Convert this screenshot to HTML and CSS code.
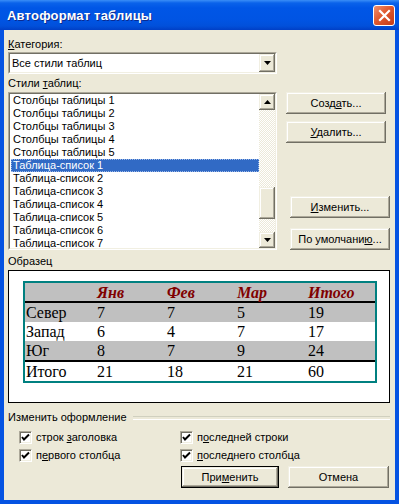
FILE: index.html
```html
<!DOCTYPE html>
<html>
<head>
    <title>Автоформат таблицы</title>
    <link rel="stylesheet" href="styles.css">
</head>
<body>
    <div class="window">
        <div class="titlebar">
            <span class="title">Автоформат таблицы</span>
            <span class="close">
                <svg width="13" height="13" viewBox="0 0 13 13"><path d="M2 2L11 11M11 2L2 11" stroke="#fff" stroke-width="2.2" stroke-linecap="square"/></svg>
            </span>
        </div>

        <div class="dialog">
            <div class="label"><u>К</u>атегория:</div>
            <div class="combo">
                <div class="combo-inner">
                    <span class="combo-text">Все стили таблиц</span>
                    <span class="arrow-btn">
                        <svg width="7" height="4" viewBox="0 0 7 4"><path d="M0 0H7L3.5 4Z" fill="#000"/></svg>
                    </span>
                </div>
            </div>

            <div class="label label-styles">Стили <u>т</u>аблиц:</div>
            <div class="styles-row">
                <div class="list">
                    <div class="list-inner">
                        <div class="items">
                            <div class="item">Столбцы таблицы 1</div>
                            <div class="item">Столбцы таблицы 2</div>
                            <div class="item">Столбцы таблицы 3</div>
                            <div class="item">Столбцы таблицы 4</div>
                            <div class="item">Столбцы таблицы 5</div>
                            <div class="item selected">Таблица-список 1</div>
                            <div class="item">Таблица-список 2</div>
                            <div class="item">Таблица-список 3</div>
                            <div class="item">Таблица-список 4</div>
                            <div class="item">Таблица-список 5</div>
                            <div class="item">Таблица-список 6</div>
                            <div class="item">Таблица-список 7</div>
                        </div>
                        <div class="scrollbar">
                            <span class="arrow-btn scroll-btn">
                                <svg width="7" height="4" viewBox="0 0 7 4"><path d="M0 4H7L3.5 0Z" fill="#000"/></svg>
                            </span>
                            <div class="track">
                                <span class="thumb"></span>
                            </div>
                            <span class="arrow-btn scroll-btn">
                                <svg width="7" height="4" viewBox="0 0 7 4"><path d="M0 0H7L3.5 4Z" fill="#000"/></svg>
                            </span>
                        </div>
                    </div>
                </div>

                <div class="side">
                    <button class="btn">Созд<u>а</u>ть...</button>
                    <button class="btn btn-gap"><u>У</u>далить...</button>
                    <button class="btn btn-shift btn-low"><u>И</u>зменить...</button>
                    <button class="btn btn-shift btn-gap2">По умолчани<u>ю</u>...</button>
                </div>
            </div>

            <div class="label label-sample">Образец</div>
            <div class="sample">
                <table class="sample-table">
                    <tr class="head">
                        <td></td><td>Янв</td><td>Фев</td><td>Мар</td><td>Итого</td>
                    </tr>
                    <tr class="shade">
                        <td>Север</td><td>7</td><td>7</td><td>5</td><td>19</td>
                    </tr>
                    <tr>
                        <td>Запад</td><td>6</td><td>4</td><td>7</td><td>17</td>
                    </tr>
                    <tr class="shade">
                        <td>Юг</td><td>8</td><td>7</td><td>9</td><td>24</td>
                    </tr>
                    <tr class="total">
                        <td>Итого</td><td>21</td><td>18</td><td>21</td><td>60</td>
                    </tr>
                </table>
            </div>

            <div class="group-title">Изменить оформление</div>
            <div class="options">
                <label class="option">
                    <span class="check"><svg width="11" height="11" viewBox="0 0 11 11"><path d="M2 5L4 7.5L9 2.5" stroke="#000" stroke-width="2" fill="none"/></svg></span>
                    <span>строк <u>з</u>аголовка</span>
                </label>
                <label class="option">
                    <span class="check"><svg width="11" height="11" viewBox="0 0 11 11"><path d="M2 5L4 7.5L9 2.5" stroke="#000" stroke-width="2" fill="none"/></svg></span>
                    <span>п<u>о</u>следней строки</span>
                </label>
                <label class="option">
                    <span class="check"><svg width="11" height="11" viewBox="0 0 11 11"><path d="M2 5L4 7.5L9 2.5" stroke="#000" stroke-width="2" fill="none"/></svg></span>
                    <span>п<u>е</u>рвого столбца</span>
                </label>
                <label class="option">
                    <span class="check"><svg width="11" height="11" viewBox="0 0 11 11"><path d="M2 5L4 7.5L9 2.5" stroke="#000" stroke-width="2" fill="none"/></svg></span>
                    <span><u>п</u>оследнего столбца</span>
                </label>
            </div>

            <div class="actions">
                <button class="btn btn-default">При<u>м</u>енить</button>
                <button class="btn btn-cancel">Отмена</button>
            </div>
        </div>
    </div>
</body>
</html>
```

FILE: styles.css
```css
:root {
    --face: #ece9d8;
    --light: #f1efe2;
    --shadow: #aca899;
    --dark: #716f64;
    --frame: #0553e2;
    --select: #316ac5;
}

* {
    box-sizing: border-box;
}

html, body {
    margin: 0;
    padding: 0;
}

body {
    width: 399px;
    height: 504px;
    overflow: hidden;
    font-family: "Liberation Sans", Arial, sans-serif;
    font-size: 11px;
    color: #000;
}

u {
    text-decoration-thickness: 1px;
    text-underline-offset: 1px;
}

.window {
    width: 399px;
    height: 504px;
    display: flex;
    flex-direction: column;
}

.titlebar {
    height: 30px;
    flex: none;
    display: flex;
    align-items: center;
    justify-content: space-between;
    padding: 0 4px 0 7px;
    background: linear-gradient(#3a8ef7 0, #0a62ea 3px, #0056e6 8px, #0054e3 20px, #0150da 26px, #003fc6 30px);
}

.title {
    color: #fff;
    font-weight: bold;
    font-size: 13px;
    letter-spacing: 0.2px;
    text-shadow: 1px 1px #0b2a8f;
}

.close {
    width: 22px;
    height: 21px;
    display: flex;
    align-items: center;
    justify-content: center;
    border: 1px solid #fff;
    border-radius: 3px;
    background: linear-gradient(135deg, #f0906f 0%, #e0592f 45%, #c43a17 100%);
}

.dialog {
    flex: 1;
    display: flex;
    flex-direction: column;
    align-items: flex-start;
    background: var(--face);
    border: solid var(--frame);
    border-width: 0 4px 4px;
    padding: 8px 5px 0 4px;
}

.label {
    line-height: 13px;
}

.label-styles {
    margin-top: 3px;
}

.label-sample {
    margin-top: 5px;
}

/* sunken fields */
.combo, .list {
    border: 1px solid;
    border-color: var(--shadow) #fff #fff var(--shadow);
}

.combo-inner, .list-inner {
    height: 100%;
    border: 1px solid;
    border-color: var(--dark) var(--light) var(--light) var(--dark);
    background: #fff;
}

.combo {
    width: 269px;
    height: 22px;
    margin-top: 1px;
}

.combo-inner {
    display: flex;
    align-items: center;
}

.combo-text {
    flex: 1;
    padding-left: 2px;
}

.arrow-btn {
    width: 16px;
    height: 18px;
    display: flex;
    align-items: center;
    justify-content: center;
    background: var(--face);
    box-shadow: inset -1px -1px var(--dark), inset 1px 1px var(--light), inset -2px -2px var(--shadow), inset 2px 2px #fff;
}

.combo .arrow-btn {
    align-self: stretch;
    height: auto;
}

.styles-row {
    display: flex;
    gap: 9px;
    margin-top: 2px;
}

.list {
    width: 269px;
    height: 158px;
}

.list-inner {
    display: flex;
}

.items {
    flex: 1;
    overflow: hidden;
}

.item {
    height: 13px;
    line-height: 13px;
    padding-left: 2px;
    margin-left: 1px;
    white-space: nowrap;
}

.item.selected {
    background: var(--select);
    color: #fff;
    outline: 1px dotted #9bb8e8;
    outline-offset: -1px;
}

.scrollbar {
    width: 16px;
    display: flex;
    flex-direction: column;
}

.scroll-btn {
    height: 16px;
    flex: none;
}

.track {
    flex: 1;
    background: repeating-conic-gradient(#fff 0 25%, var(--face) 0 50%) 0 0 / 2px 2px;
}

.thumb {
    display: block;
    height: 32px;
    margin-top: 77px;
    background: var(--face);
    box-shadow: inset -1px -1px var(--dark), inset 1px 1px var(--light), inset -2px -2px var(--shadow), inset 2px 2px #fff;
}

.side {
    width: 104px;
    display: flex;
    flex-direction: column;
}

.btn {
    height: 22px;
    width: 100px;
    padding: 0;
    border: none;
    background: var(--face);
    font-family: inherit;
    font-size: 11px;
    color: #000;
    box-shadow: inset -1px -1px var(--dark), inset 1px 1px var(--light), inset -2px -2px var(--shadow), inset 2px 2px #fff;
}

.btn-gap {
    margin-top: 7px;
}

.btn-shift {
    margin-left: 4px;
}

.btn-low {
    margin-top: auto;
}

.btn-gap2 {
    margin-top: 10px;
}

/* sample preview */
.sample {
    width: 382px;
    height: 133px;
    margin-top: 2px;
    padding: 10px 0 0 14px;
    background: #fff;
    border: 1px solid #000;
}

.sample-table {
    width: 354px;
    table-layout: fixed;
    border-collapse: separate;
    border-spacing: 0;
    border: 2px solid #008080;
    font-family: "Liberation Serif", "Times New Roman", serif;
    font-size: 16px;
}

.sample-table td {
    height: 19px;
    line-height: 19px;
    padding: 0 0 0 1px;
    white-space: nowrap;
}

.sample-table td:nth-child(1) { width: 71px; }
.sample-table td:nth-child(2) { width: 70px; }
.sample-table td:nth-child(3) { width: 70px; }
.sample-table td:nth-child(4) { width: 71px; }

.head td {
    height: 18px;
    line-height: 17px;
    padding-top: 1px;
    background: #c0c0c0;
    color: #800000;
    font-weight: bold;
    font-style: italic;
    border-bottom: 2px solid #000;
}

.shade td {
    background: #c0c0c0;
}

.total td {
    border-top: 2px solid #000;
}

/* options group */
.group-title {
    align-self: stretch;
    display: flex;
    align-items: center;
    gap: 6px;
    margin-top: 8px;
    line-height: 13px;
}

.group-title::after {
    content: '';
    flex: 1;
    height: 2px;
    border-top: 1px solid #d0d0bf;
    border-bottom: 1px solid #fff;
}

.options {
    display: grid;
    grid-template-columns: 161px auto;
    row-gap: 5px;
    margin-top: 7px;
    padding-left: 11px;
}

.option {
    display: flex;
    align-items: center;
    gap: 4px;
    height: 13px;
    line-height: 13px;
    white-space: nowrap;
}

.check {
    width: 13px;
    height: 13px;
    flex: none;
    display: flex;
    align-items: center;
    justify-content: center;
    border: 1px solid;
    border-color: var(--shadow) #fff #fff var(--shadow);
    background: #fff;
    box-shadow: inset 1px 1px var(--dark), inset -1px -1px var(--light);
}

.actions {
    align-self: stretch;
    display: flex;
    justify-content: flex-end;
    gap: 9px;
    margin-top: 4px;
    padding-right: 1px;
}

.btn-default {
    width: 98px;
    border: 1px solid #000;
}

.btn-cancel {
    width: 101px;
}
```
